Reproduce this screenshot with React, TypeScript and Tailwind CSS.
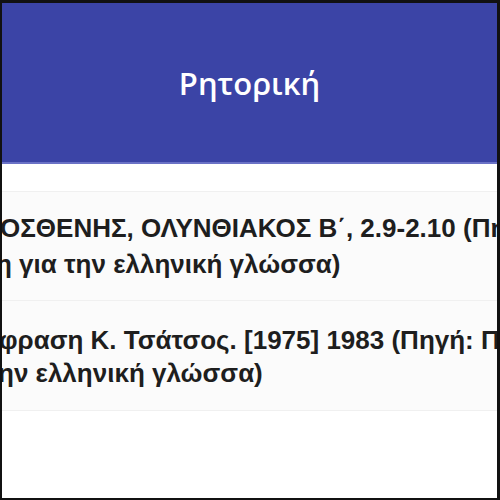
import React from "react";

export default function App() {
  const font = { fontFamily: '"Liberation Sans", Arial, sans-serif' };
  return (
    <div className="w-[500px] h-[500px] overflow-hidden bg-white border-t-[3px] border-l-2 border-r-[3px] border-b-2 border-[#111] flex flex-col">
      <div className="h-[161px] shrink-0 bg-[#3b44a6] border-b-2 border-[#6a72c6] flex items-center justify-center">
        <span
          className="text-white text-[31px] font-semibold leading-none mt-[2px]"
          style={{ fontFamily: '"Open Sans", "Noto Sans", sans-serif' }}
        >
          Ρητορική
        </span>
      </div>
      <div className="h-[27px] shrink-0 bg-white" />
      <div className="border-t border-[#f0f0f0] bg-[#fbfbfb] h-[109px] shrink-0 pt-[18px] text-[#1e1e1e] font-bold text-[26px] leading-[36px] whitespace-nowrap overflow-hidden" style={font}>
        <div className="ml-[-2px]">ΟΣΘΕΝΗΣ, ΟΛΥΝΘΙΑΚΟΣ Β΄, 2.9-2.10 (Πηγή: Πύλη</div>
        <div className="ml-[-6px]">η για την ελληνική γλώσσα)</div>
      </div>
      <div className="border-t border-[#f0f0f0] bg-[#fbfbfb] h-[111px] shrink-0 pt-[23px] text-[#1e1e1e] font-bold text-[26px] leading-[33px] whitespace-nowrap overflow-hidden border-b" style={font}>
        <div className="ml-[-3px]">φραση Κ. Τσάτσος. [1975] 1983 (Πηγή: Πύλη</div>
        <div className="ml-[-4px]">ην ελληνική γλώσσα)</div>
      </div>
      <div className="flex-1 bg-white" />
    </div>
  );
}
